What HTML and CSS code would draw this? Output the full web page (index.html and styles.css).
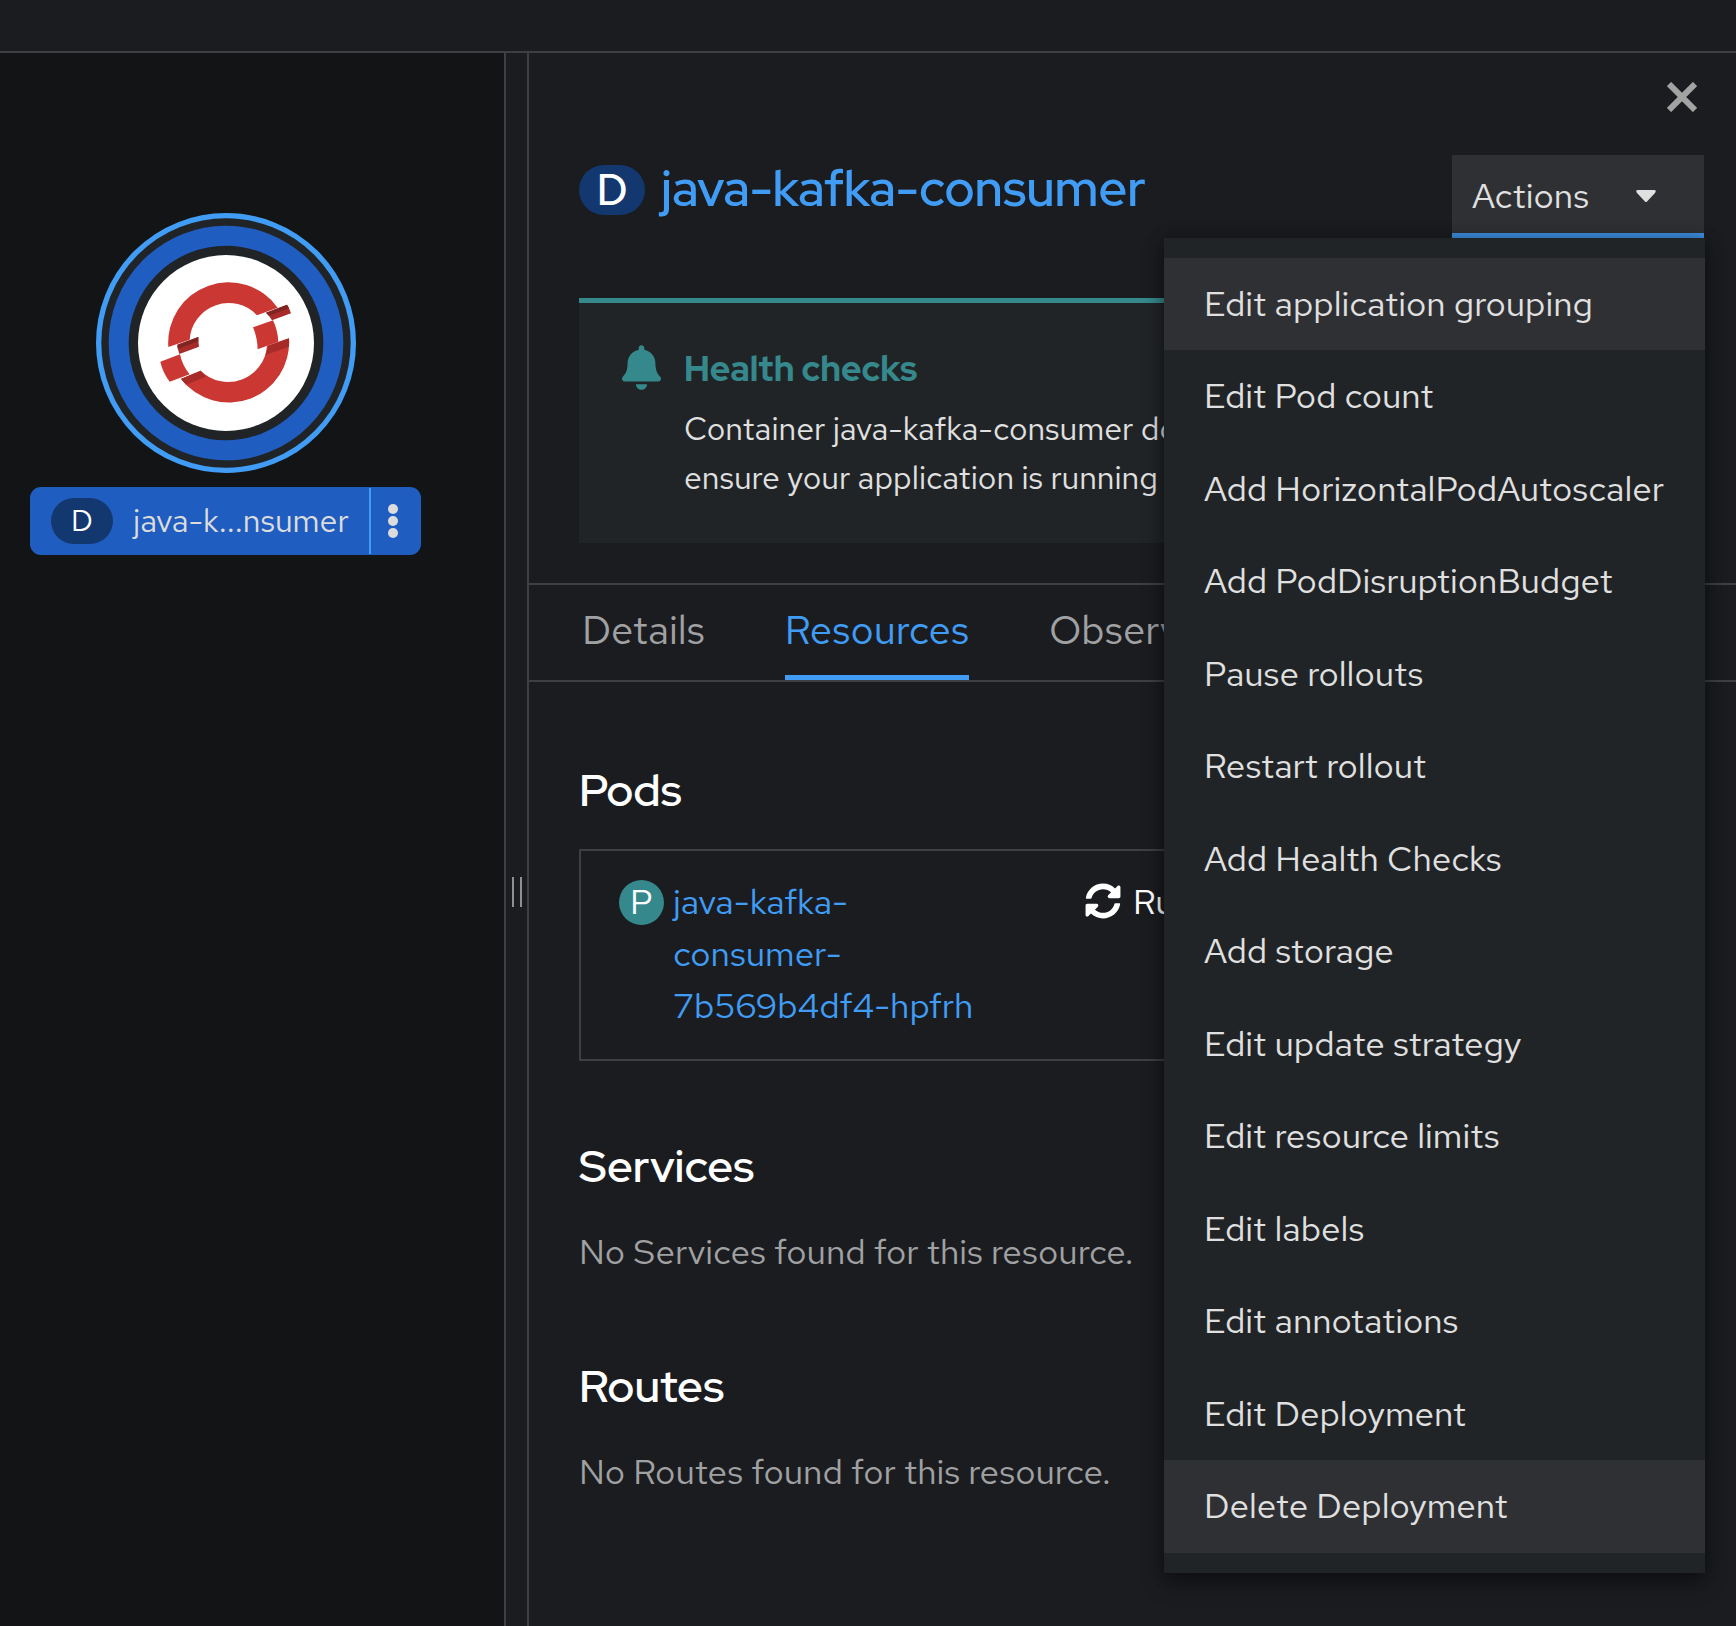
FILE: index.html
```html
<!DOCTYPE html>
<html lang="en">
<head>
<meta charset="utf-8">
<meta name="viewport" content="width=device-width, initial-scale=1">
<title>java-kafka-consumer</title>
<link rel="stylesheet" href="styles.css">
</head>
<body>
<header class="toolbar"></header>
<main class="workspace">
  <section class="canvas" aria-label="Topology">
    <div class="node">
      <svg class="node-icon" viewBox="47 39 780 780" aria-hidden="true">
        <circle cx="437" cy="429" r="382" fill="#212427" stroke="#409cf5" stroke-width="16"/>
        <circle cx="437" cy="429" r="322" fill="none" stroke="#1f5dc1" stroke-width="60"/>
        <circle cx="437" cy="429" r="264" fill="#fff"/>
        <g fill="#cb3733">
          <path d="M264 441A181 181 0 0 1 592 323L530 346A117 117 0 0 0 328 419Z"/>
          <path d="M626 415A181 181 0 0 1 302 537L361 512A117 117 0 0 0 560 437Z"/>
          <path d="M518 382L578 361Q592 390 594 425L532 448Q531 412 518 382Z"/>
          <path d="M240 485L299 463Q306 497 328 523L268 545Q247 517 240 485Z"/>
        </g>
        <g fill="#a72b28">
          <path d="M557 338L620 314Q628 326 632 340L575 361Q568 348 557 338Z"/>
          <path d="M291 434L354 411Q354 426 356 440L297 462Q292 448 291 434Z"/>
          <path d="M564 437L626 415Q627 428 626 440L557 464Q560 450 564 437Z"/>
          <path d="M302 536L361 512Q368 520 377 530L317 554Q309 546 302 536Z"/>
        </g>
        <g fill="#7e2423">
          <path d="M557 338L620 314L626 324L566 347Z"/>
          <path d="M291 434L354 411V424L292 446Z"/>
        </g>
      </svg>
      <div class="node-label">
        <span class="badge badge-small">D</span>
        <span class="node-name">java-k...nsumer</span>
        <button class="node-menu" type="button" aria-label="Node actions">
          <svg viewBox="0 0 10 34" width="10" height="34" fill="#dcdcdc" aria-hidden="true"><circle cx="5" cy="5" r="5"/><circle cx="5" cy="17" r="5"/><circle cx="5" cy="29" r="5"/></svg>
        </button>
      </div>
    </div>
  </section>
  <div class="splitter"><span class="grip"></span></div>
  <section class="panel">
    <div class="panel-close">
      <button class="close" type="button" aria-label="Close">
        <svg viewBox="0 0 30 30" width="30" height="30" stroke="#a3a3a3" stroke-width="6" aria-hidden="true"><path d="M2 2L28 28M28 2L2 28"/></svg>
      </button>
    </div>
    <div class="panel-head">
      <h1 class="title"><span class="badge">D</span><a href="#">java-kafka-consumer</a></h1>
      <div class="dropdown">
        <button class="toggle" type="button" aria-expanded="true">Actions
          <svg viewBox="0 0 20 12" width="20" height="12" fill="#e0e0e0" aria-hidden="true"><path d="M2 0H18Q21 0 19 3L11 11.500Q10 12.500 9 11.500L1 3Q-1 0 2 0Z"/></svg>
        </button>
        <ul class="menu">
          <li><button class="current" type="button">Edit application grouping</button></li>
          <li><button type="button">Edit Pod count</button></li>
          <li><button type="button">Add HorizontalPodAutoscaler</button></li>
          <li><button type="button">Add PodDisruptionBudget</button></li>
          <li><button type="button">Pause rollouts</button></li>
          <li><button type="button">Restart rollout</button></li>
          <li><button type="button">Add Health Checks</button></li>
          <li><button type="button">Add storage</button></li>
          <li><button type="button">Edit update strategy</button></li>
          <li><button type="button">Edit resource limits</button></li>
          <li><button type="button">Edit labels</button></li>
          <li><button type="button">Edit annotations</button></li>
          <li><button type="button">Edit Deployment</button></li>
          <li><button class="current" type="button">Delete Deployment</button></li>
        </ul>
      </div>
    </div>
    <div class="alert">
      <svg class="bell" viewBox="0 0 448 512" width="39" height="45" fill="#35888b" aria-hidden="true"><path d="M224 512c35.320 0 63.970-28.650 63.970-64H160.030c0 35.350 28.650 64 63.970 64zm215.390-149.710c-19.320-20.760-55.470-51.990-55.470-154.290 0-77.700-54.480-139.900-127.940-155.160V32c0-17.670-14.320-32-31.980-32s-31.980 14.330-31.980 32v20.840C118.560 68.100 64.080 130.300 64.080 208c0 102.300-36.150 133.530-55.470 154.290-6 6.450-8.660 14.160-8.610 21.710.11 16.400 12.980 32 32.100 32h383.800c19.120 0 32-15.600 32.100-32 .05-7.550-2.610-15.270-8.610-21.710z"/></svg>
      <div>
        <h2 class="alert-title">Health checks</h2>
        <p class="alert-text">Container java-kafka-consumer does not have health checks to ensure your application is running correctly.</p>
      </div>
    </div>
    <nav class="tabs">
      <a href="#">Details</a>
      <a class="active" href="#">Resources</a>
      <a href="#">Observe</a>
    </nav>
    <div class="resources">
      <h2 class="heading">Pods</h2>
      <div class="pod">
        <span class="badge-pod">P</span>
        <a class="pod-name" href="#">java-kafka-consumer-7b569b4df4-hpfrh</a>
        <span class="status">
          <svg viewBox="0 0 512 512" width="36" height="36" fill="#fff" aria-hidden="true"><path d="M370.720 133.280C339.458 104.008 298.888 87.962 255.848 88c-77.458.068-144.328 53.178-162.791 126.850-1.344 5.363-6.122 9.150-11.651 9.150H24.103c-7.498 0-13.194-6.807-11.807-14.176C33.933 94.924 134.813 8 256 8c66.448 0 126.791 26.136 171.315 68.685L463.030 40.970C478.149 25.851 504 36.559 504 57.941V192c0 13.255-10.745 24-24 24H345.941c-21.382 0-32.090-25.851-16.971-40.971l41.750-41.749zM32 296h134.059c21.382 0 32.090 25.851 16.971 40.971l-41.750 41.750c31.262 29.273 71.835 45.319 114.876 45.280 77.418-.070 144.315-53.144 162.787-126.849 1.344-5.363 6.122-9.150 11.651-9.150h57.304c7.498 0 13.194 6.807 11.807 14.176C478.067 417.076 377.187 504 256 504c-66.448 0-126.791-26.136-171.315-68.685L48.970 471.030C33.851 486.149 8 475.441 8 454.059V320c0-13.255 10.745-24 24-24z"/></svg>
          Running
        </span>
      </div>
      <h2 class="heading">Services</h2>
      <p class="empty">No Services found for this resource.</p>
      <h2 class="heading">Routes</h2>
      <p class="empty">No Routes found for this resource.</p>
    </div>
  </section>
</main>
</body>
</html>
```
FILE: styles.css
```css
* { box-sizing: border-box; }

body {
  margin: 0;
  min-height: 100vh;
  display: flex;
  flex-direction: column;
  background: #1b1c20;
  color: #e0e0e0;
  font: 35px/52px "Red Hat Text", Inter, sans-serif;
}

h1, h2, p, ul { margin: 0; padding: 0; }
h1, h2 { font-family: "Red Hat Display", "Red Hat Text", Inter, sans-serif; }
a { color: #409cf5; text-decoration: none; }
svg { display: block; flex: none; }
button {
  margin: 0;
  border: 0;
  padding: 0;
  background: none;
  color: inherit;
  font: inherit;
  cursor: pointer;
}

.toolbar { height: 53px; border-bottom: 2px solid #3e3f42; }
.workspace { flex: 1; display: flex; }

.canvas { flex: 0 0 504px; padding: 160px 0 0 30px; background: #121415; }
.node { width: 391px; display: flex; flex-direction: column; align-items: center; gap: 14px; }
.node-icon { width: 260px; height: 260px; }
.node-label {
  align-self: stretch;
  height: 68px;
  display: flex;
  align-items: center;
  padding-left: 21px;
  border-radius: 11px;
  background: #1f5dc1;
  color: #dcdcdc;
  font-size: 32px;
}
.node-name { flex: 1; padding-left: 20px; white-space: nowrap; }
.node-menu {
  width: 52px;
  height: 66px;
  display: flex;
  align-items: center;
  padding-left: 17px;
  border-left: 2px solid #409cf5;
}

.badge {
  flex: none;
  width: 66px;
  height: 50px;
  border-radius: 25px;
  background: #13386f;
  color: #fff;
  font: 500 43px/50px "Red Hat Text", Inter, sans-serif;
  text-align: center;
}
.badge-small { width: 62px; height: 46px; font-size: 30px; font-weight: 400; line-height: 45px; }

.splitter {
  flex: 0 0 25px;
  display: flex;
  align-items: center;
  justify-content: center;
  border: solid #3e3f42;
  border-width: 0 2px;
}
.grip { width: 10px; height: 30px; margin-top: 104px; border: solid #8f9093; border-width: 0 2px; }

.panel { flex: 1; min-width: 0; }
.panel-close { display: flex; justify-content: flex-end; padding: 29px 39px 0 0; }
.panel-head {
  display: flex;
  align-items: flex-start;
  justify-content: space-between;
  padding: 43px 32px 60px 50px;
}
.title {
  display: flex;
  align-items: center;
  gap: 16px;
  padding-top: 3px;
  font-size: 50px;
  font-weight: 600;
  line-height: 64px;
  white-space: nowrap;
}
.title a { padding-bottom: 4px; line-height: 60px; }

.dropdown { position: relative; }
.toggle {
  width: 252px;
  height: 83px;
  display: flex;
  align-items: center;
  justify-content: space-between;
  padding: 3px 48px 0 20px;
  border-bottom: 5px solid #3d8fe3;
  background: #2f3034;
}
.menu {
  position: absolute;
  z-index: 1;
  top: 83px;
  right: -1px;
  width: 541px;
  padding: 20px 0;
  background: #212427;
  box-shadow: 0 10px 20px rgba(0, 0, 0, .36), 0 0 15px rgba(0, 0, 0, .3);
  list-style: none;
}
.menu button {
  display: block;
  width: 100%;
  padding: 20px 40px;
  text-align: left;
  white-space: nowrap;
}
.menu li:nth-child(even) button { padding-bottom: 21px; }
.menu .current { background: #2f3034; }

.alert {
  display: flex;
  gap: 23px;
  margin: 0 50px 40px;
  padding: 42px 20px 41px 43px;
  border-top: 5px solid #35888b;
  background: #212427;
}
.alert-title { color: #35888b; font-size: 35px; font-weight: 800; line-height: 48px; }
.alert-text { padding-top: 11px; font-size: 32px; line-height: 49px; }

.tabs {
  display: flex;
  gap: 80px;
  padding-left: 53px;
  border: solid #3e3f42;
  border-width: 2px 0;
}
.tabs a { padding: 17px 0 18px; border-bottom: 5px solid transparent; color: #a0a1a3; font-size: 40px; line-height: 55px; }
.tabs .active { border-color: #409cf5; color: #409cf5; }

.resources { padding: 78px 50px 40px; }
.heading { color: #fff; font-size: 45px; font-weight: 600; line-height: 60px; }
.pod {
  display: grid;
  grid-template-columns: 45px 320px 1fr;
  column-gap: 9px;
  margin: 29px 0 75px;
  padding: 25px 38px 27px;
  border: 2px solid #3e3f42;
}
.badge-pod {
  height: 45px;
  margin-top: 4px;
  border-radius: 50%;
  background: #35888b;
  color: #fff;
  line-height: 44px;
  text-align: center;
}
.status { display: flex; gap: 12px; padding-left: 83px; color: #fff; }
.status svg { margin-top: 7px; }
.empty { margin: 30px 0 78px; color: #a0a1a3; }
```
